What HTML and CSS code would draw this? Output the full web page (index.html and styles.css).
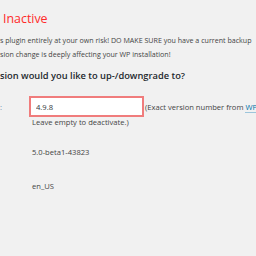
FILE: index.html
```html
<!DOCTYPE html>
<html lang="en">
<head>
    <meta charset="UTF-8">
    <title>WP Downgrade</title>
    <link rel="stylesheet" href="styles.css">
</head>
<body>
    <div class="wrap">
        <h1 class="status">Inactive</h1>
        <p class="warning">s plugin entirely at your own risk! DO MAKE SURE you have a current backup<br>sion change is deeply affecting your WP installation!</p>
        <h2 class="question">sion would you like to up-/downgrade to?</h2>
        <div class="form-table">
            <div class="label">:</div>
            <div class="field first">
                <div class="input-row">
                    <input type="text" class="version-input" value="4.9.8">
                    <span class="hint">(Exact version number from <a href="#">WP</a></span>
                </div>
                <div class="desc">Leave empty to deactivate.)</div>
            </div>
            <div class="label"></div>
            <div class="field value">5.0-beta1-43823</div>
            <div class="label"></div>
            <div class="field value">en_US</div>
        </div>
    </div>
</body>
</html>
```

FILE: styles.css
```css
body {
    margin: 0;
    background-color: #f1f1f1;
    color: #444;
    font-family: 'Open Sans', sans-serif;
    overflow: hidden;
    white-space: nowrap;
}

.wrap {
    padding: 8px 0 0 0;
}

.status {
    margin: 0 0 0 3px;
    color: #ff2a2a;
    font-size: 12.4px;
    font-weight: 400;
    line-height: 22px;
}

.warning {
    margin: 3px 0 0 0;
    font-size: 7.1px;
    line-height: 14px;
}

.question {
    margin: 7px 0 0 0;
    color: #23282d;
    font-size: 9.3px;
    font-weight: 600;
    line-height: 16px;
}

.form-table {
    display: grid;
    grid-template-columns: 29px auto;
    margin: 12px 0 0 0;
    font-size: 7.6px;
}

.label {
    color: #6a8ab0;
    padding-top: 6px;
}

.field.first {
    padding-bottom: 8px;
}

.input-row {
    display: flex;
    align-items: center;
}

.version-input {
    width: 115px;
    height: 21px;
    box-sizing: border-box;
    margin: 0;
    padding: 0 5px;
    border: 2px solid #f07c7c;
    background-color: #fff;
    color: #32373c;
    font-family: 'Open Sans', sans-serif;
    font-size: 7.6px;
    outline: none;
}

.hint {
    margin-left: 1px;
}

.hint a {
    color: #0073aa;
    text-decoration: none;
    border-bottom: 1px solid #9cc5db;
}

.desc {
    padding-left: 3px;
    line-height: 10px;
}

.value {
    padding: 11px 0 11px 3px;
    line-height: 12px;
}
```
